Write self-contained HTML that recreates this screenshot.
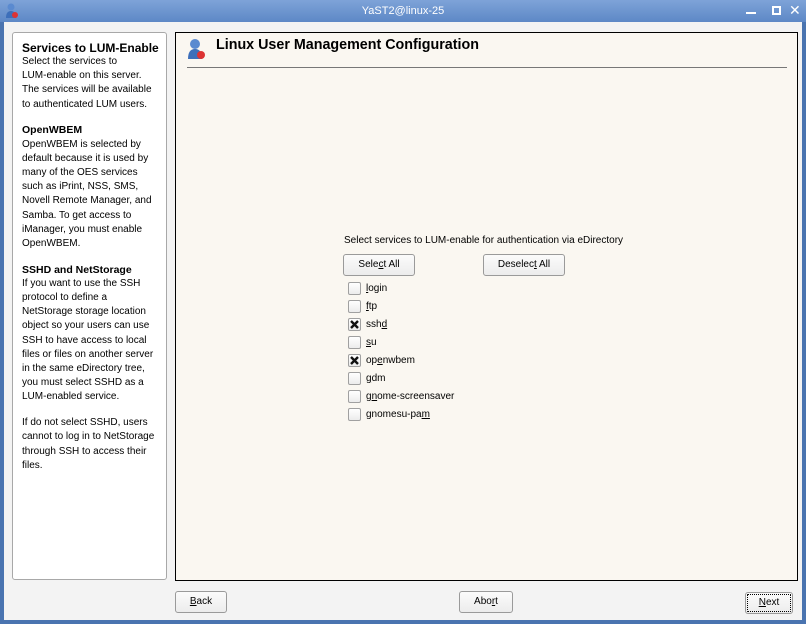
<!DOCTYPE html>
<html><head><style>
*{margin:0;padding:0;box-sizing:border-box}
body{width:806px;height:624px;overflow:hidden;background:#4a74b0;font-family:"Liberation Sans","DejaVu Sans",sans-serif;font-size:10px;color:#000;position:relative}
.title{position:absolute;left:0;top:0;width:806px;height:22px;background:linear-gradient(#7ea3d8,#5d88c6);color:#fff;text-align:center;font-size:11px;line-height:22px}
.win{position:absolute;left:4px;top:22px;width:798px;height:598px;background:#f3f3f3}
.left{position:absolute;left:12px;top:32px;width:155px;height:548px;background:#fff;border:1px solid #a8a8a8;border-radius:3px;padding:8px 0 0 9px;line-height:14.2px;font-size:10px}
.left h3{font-size:12px;font-weight:bold;line-height:14px}
.left h4{font-size:10.5px;font-weight:bold;line-height:14.2px}
.left p{margin-bottom:11.5px}
.right{position:absolute;left:175px;top:32px;width:623px;height:549px;background:#faf7f1;border:1px solid #000}
.hdr{position:absolute;left:40px;top:4px;font-size:14.3px;font-weight:bold}
.rule{position:absolute;left:11px;top:34px;width:600px;border-top:1px solid #777}
.btn{position:absolute;height:22px;border:1px solid #9a9a9a;border-radius:3px;background:linear-gradient(#fbfbfb,#ececec);text-align:center;line-height:20px;font-size:10px}
.cb{position:absolute;left:348px;width:13px;height:13px;border:1px solid #a0a0a0;background:linear-gradient(#fff,#ececec);border-radius:2px}
.lb{position:absolute;left:366px;font-size:10px;line-height:13px}
u{text-decoration:underline}
</style></head><body>
<div class="title">YaST2@linux-25</div>
<svg style="position:absolute;left:5px;top:3px" width="14" height="16"><circle cx="6" cy="4" r="3.5" fill="#5a8ad0"/><path d="M1 15 Q1 8 6 8 Q11 8 11 15Z" fill="#3d6fba"/><circle cx="10" cy="12" r="3" fill="#d33"/></svg>
<div style="position:absolute;left:746px;top:12px;width:10px;height:2px;background:#fff"></div>
<div style="position:absolute;left:772px;top:6px;width:9px;height:9px;border:2px solid #fff"></div>
<div style="position:absolute;left:789px;top:2px;color:#fff;font-size:14px;font-weight:bold">✕</div>
<div class="win"></div>
<div class="left">
<h3>Services to LUM-Enable</h3>
<p>Select the services to<br>LUM-enable on this server.<br>The services will be available<br>to authenticated LUM users.</p>
<h4>OpenWBEM</h4>
<p>OpenWBEM is selected by<br>default because it is used by<br>many of the OES services<br>such as iPrint, NSS, SMS,<br>Novell Remote Manager, and<br>Samba. To get access to<br>iManager, you must enable<br>OpenWBEM.</p>
<h4>SSHD and NetStorage</h4>
<p>If you want to use the SSH<br>protocol to define a<br>NetStorage storage location<br>object so your users can use<br>SSH to have access to local<br>files or files on another server<br>in the same eDirectory tree,<br>you must select SSHD as a<br>LUM-enabled service.</p>
<p>If do not select SSHD, users<br>cannot to log in to NetStorage<br>through SSH to access their<br>files.</p>
</div>
<div class="right">
<svg style="position:absolute;left:11px;top:5px" width="20" height="22"><circle cx="8" cy="6" r="5" fill="#5a8ad0"/><path d="M1 21 Q1 11 8 11 Q15 11 15 21Z" fill="#3d6fba"/><circle cx="14" cy="17" r="4" fill="#d33"/></svg>
<div class="hdr">Linux User Management Configuration</div>
<div class="rule"></div>
</div>
<div style="position:absolute;left:344px;top:235px;font-size:10px">Select services to LUM-enable for authentication via eDirectory</div>
<div class="btn" style="left:343px;top:254px;width:72px">Sele<u>c</u>t All</div>
<div class="btn" style="left:483px;top:254px;width:82px">Deselec<u>t</u> All</div>
<div class="cb" style="top:282px"></div><div class="lb" style="top:282px"><u>l</u>ogin</div>
<div class="cb" style="top:300px"></div><div class="lb" style="top:300px"><u>f</u>tp</div>
<div class="cb" style="top:318px"><svg width="11" height="11" style="position:absolute;left:0;top:0"><path d="M2 2L9 9M9 2L2 9" stroke="#111" stroke-width="2.4"/></svg></div><div class="lb" style="top:318px">ssh<u>d</u></div>
<div class="cb" style="top:336px"></div><div class="lb" style="top:336px"><u>s</u>u</div>
<div class="cb" style="top:354px"><svg width="11" height="11" style="position:absolute;left:0;top:0"><path d="M2 2L9 9M9 2L2 9" stroke="#111" stroke-width="2.4"/></svg></div><div class="lb" style="top:354px">op<u>e</u>nwbem</div>
<div class="cb" style="top:372px"></div><div class="lb" style="top:372px"><u>g</u>dm</div>
<div class="cb" style="top:390px"></div><div class="lb" style="top:390px">g<u>n</u>ome-screensaver</div>
<div class="cb" style="top:408px"></div><div class="lb" style="top:408px">gnomesu-pa<u>m</u></div>
<div class="btn" style="left:175px;top:591px;width:52px"><u>B</u>ack</div>
<div class="btn" style="left:459px;top:591px;width:54px">Abo<u>r</u>t</div>
<div class="btn" style="left:745px;top:592px;width:48px;outline:1px dotted #000;outline-offset:-3px"><u>N</u>ext</div>
</body></html>
